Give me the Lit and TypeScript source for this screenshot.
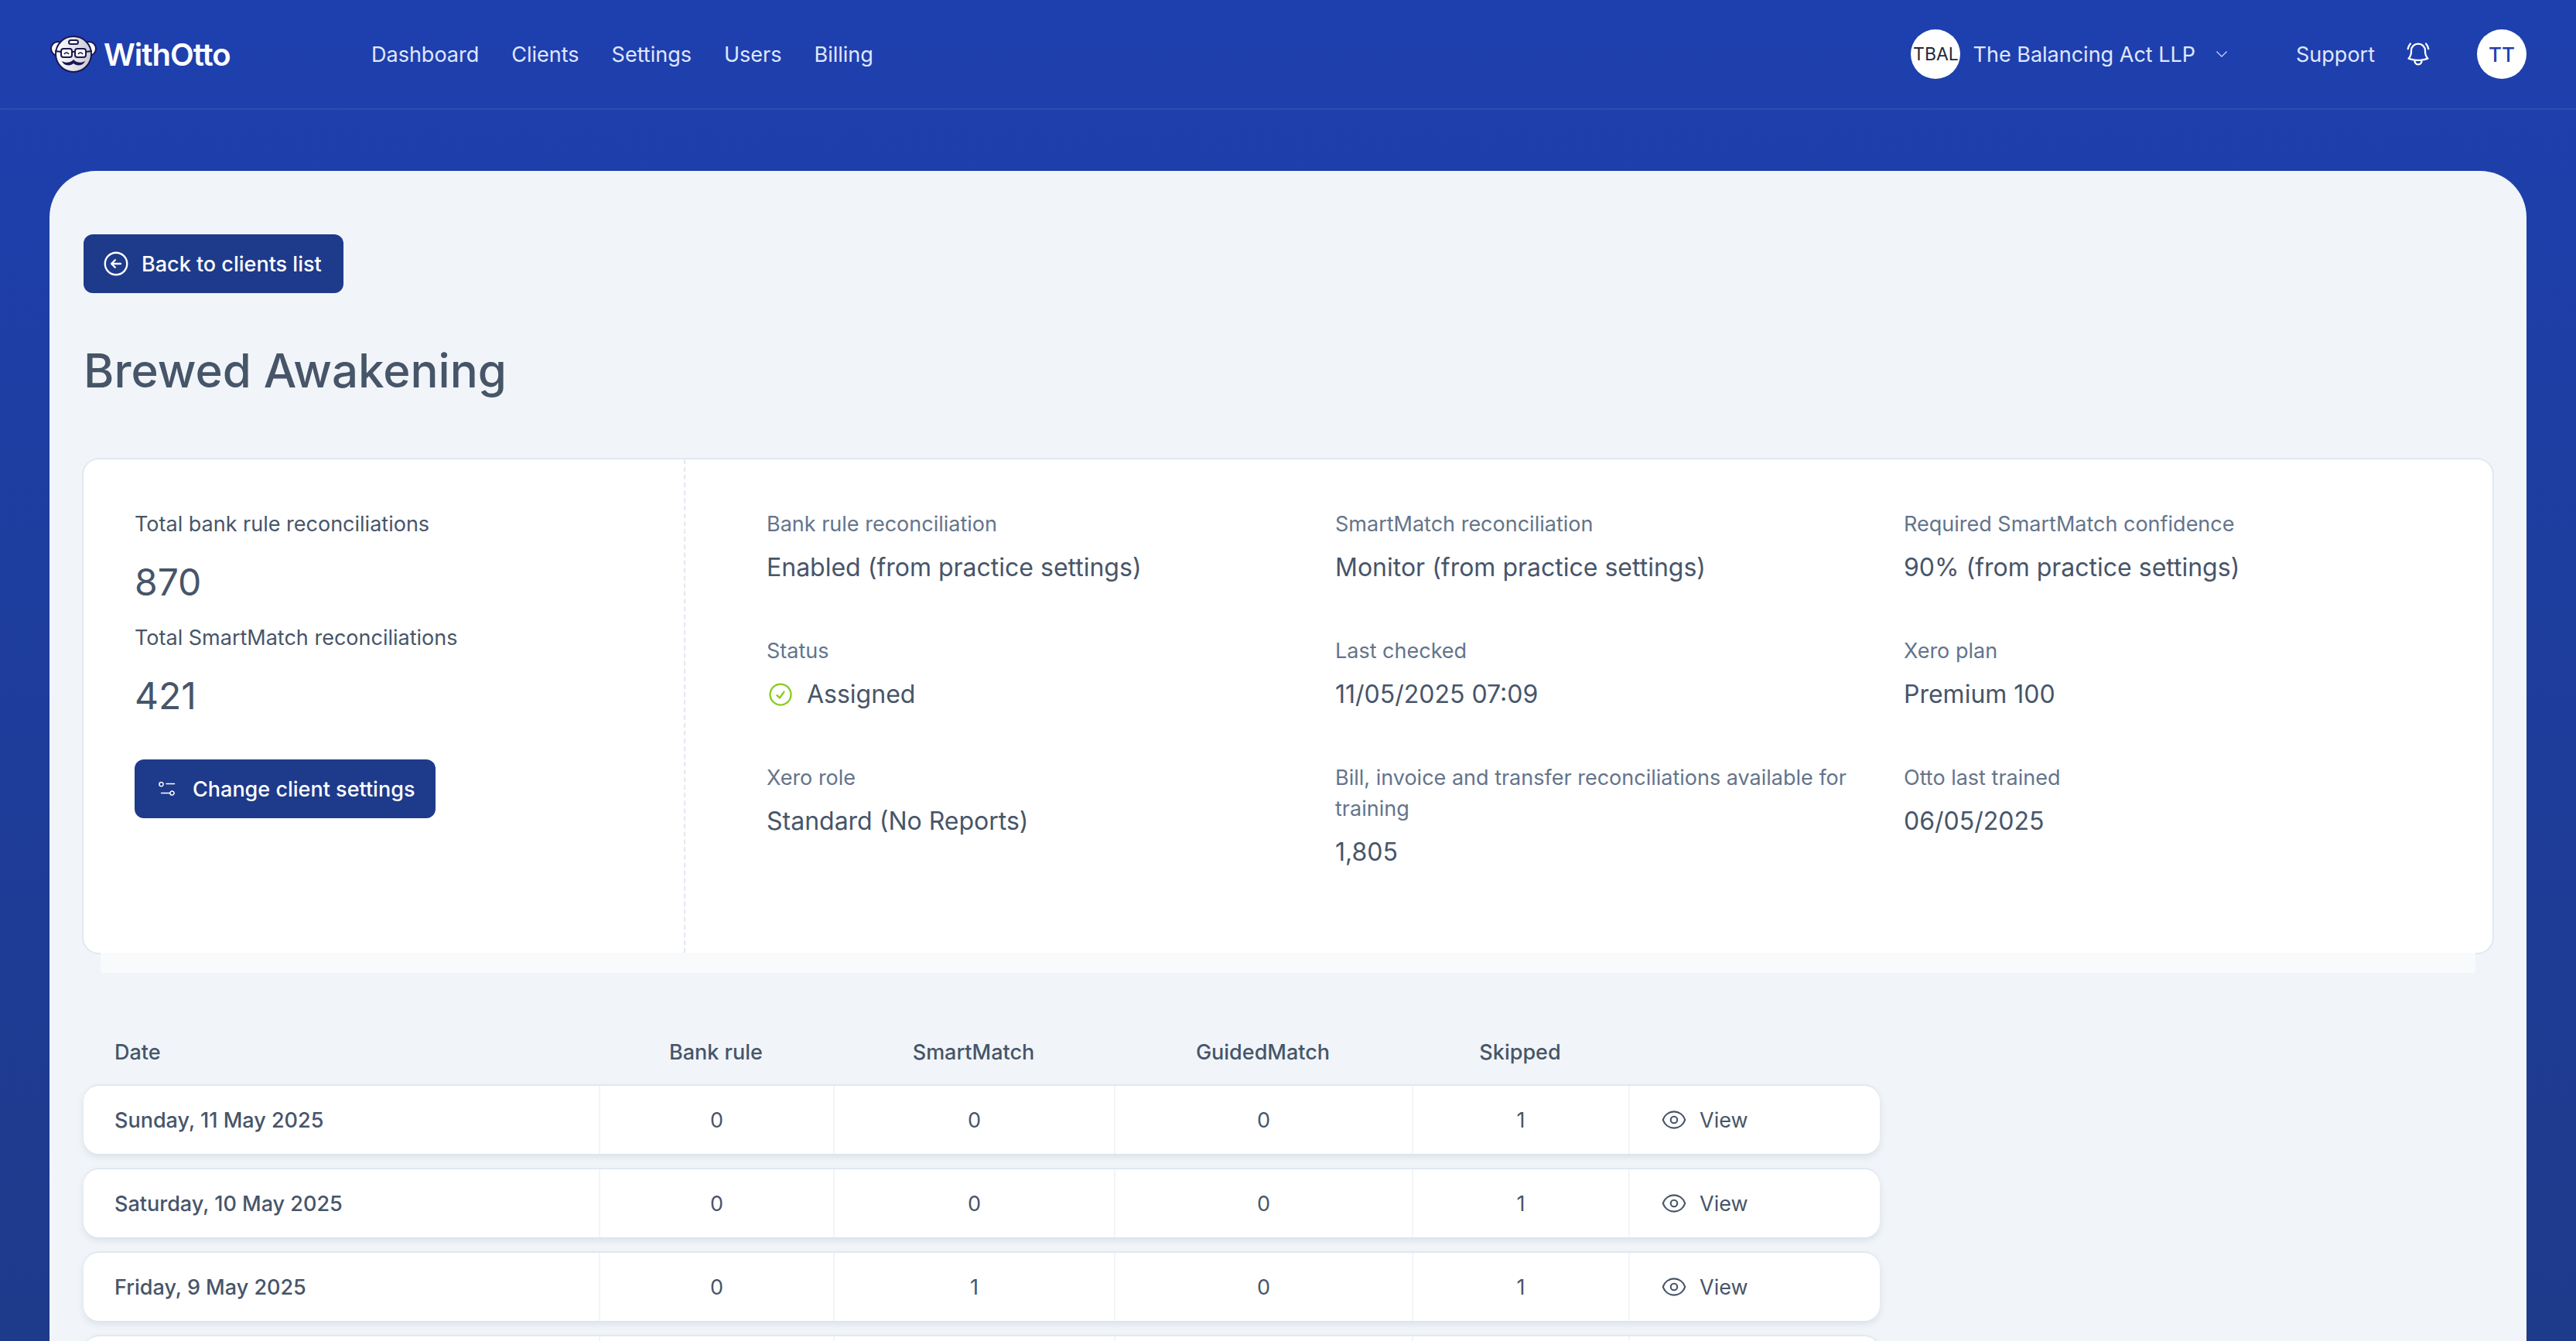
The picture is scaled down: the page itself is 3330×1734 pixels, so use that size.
import { LitElement, css, html, svg } from 'lit'
import { customElement } from 'lit/decorators.js'

const icon = (d: string, cls: string) => html`
  <svg class=${cls} viewBox="0 0 24 24" fill="none" stroke="currentColor" stroke-width="1.5"
    stroke-linecap="round" stroke-linejoin="round">${svg`<path d=${d}></path>`}</svg>
`

const EYE =
  'M2.036 12.322a1.012 1.012 0 010-.639C3.423 7.51 7.36 4.5 12 4.5c4.638 0 8.573 3.007 9.963 7.178.07.207.07.431 0 .639C20.577 16.49 16.64 19.5 12 19.5c-4.638 0-8.573-3.007-9.963-7.178zM15 12a3 3 0 11-6 0 3 3 0 016 0z'
const BELL =
  'M14.857 17.082a23.848 23.848 0 005.454-1.31A8.967 8.967 0 0118 9.75v-.7V9A6 6 0 006 9v.75a8.967 8.967 0 01-2.312 6.022c1.733.64 3.56 1.085 5.455 1.31m5.714 0a24.255 24.255 0 01-5.714 0m5.714 0a3 3 0 11-5.714 0M3.124 7.5A8.969 8.969 0 015.292 3m13.416 0a8.969 8.969 0 012.168 4.5'
const BACK = 'M11.25 9l-3 3m0 0l3 3m-3-3h7.5M21 12a9 9 0 11-18 0 9 9 0 0118 0z'
const CHECK = 'M9 12.75L11.25 15 15 9.75M21 12a9 9 0 11-18 0 9 9 0 0118 0z'
const CHEVRON = 'M19.5 8.25l-7.5 7.5-7.5-7.5'
const SLIDERS =
  'M10 5.5h10.5M3.5 3.5a2.6 2.6 0 110 5.2 2.6 2.6 0 010-5.2zM3.5 17.5h10.5M17.5 14.9a2.6 2.6 0 110 5.2 2.6 2.6 0 010-5.2z'

const details = [
  ['Bank rule reconciliation', 'Enabled (from practice settings)'],
  ['SmartMatch reconciliation', 'Monitor (from practice settings)'],
  ['Required SmartMatch confidence', '90% (from practice settings)'],
  ['Status', 'Assigned'],
  ['Last checked', '11/05/2025 07:09'],
  ['Xero plan', 'Premium 100'],
  ['Xero role', 'Standard (No Reports)'],
  ['Bill, invoice and transfer reconciliations available for training', '1,805'],
  ['Otto last trained', '06/05/2025'],
]

const rows = [
  ['Sunday, 11 May 2025', 0, 0, 0, 1],
  ['Saturday, 10 May 2025', 0, 0, 0, 1],
  ['Friday, 9 May 2025', 0, 1, 0, 1],
  ['Thursday, 8 May 2025', 0, 0, 0, 1],
]

@customElement('app-root')
export class AppRoot extends LitElement {
  static override styles = css`
    :host {
      display: block;
      height: 100vh;
      overflow: hidden;
      background: linear-gradient(#1e40af, #1e3a8a);
      font-family: 'Inter', sans-serif;
      color: #475569;
    }

    * {
      box-sizing: border-box;
    }

    .topbar {
      display: flex;
      align-items: center;
      height: 142px;
      padding: 0 64px;
      border-bottom: 2px solid rgba(255, 255, 255, 0.07);
      color: #e0e7ff;
      font-size: 27px;
    }

    .logo {
      display: flex;
      align-items: center;
      gap: 8px;
      width: 416px;
      color: #fff;
      font-size: 40px;
      font-weight: 600;
      letter-spacing: -1px;
    }

    .logo svg {
      width: 62px;
      height: 50px;
    }

    .nav {
      display: flex;
      gap: 42px;
    }

    .practice {
      display: flex;
      align-items: center;
      margin-left: auto;
    }

    .avatar {
      display: flex;
      align-items: center;
      justify-content: center;
      width: 64px;
      height: 64px;
      border-radius: 50%;
      background: #fff;
      color: #1f2937;
      font-size: 23px;
    }

    .avatar.me {
      margin-left: 58px;
      color: #1e40af;
      font-size: 26px;
      font-weight: 500;
    }

    .practice span {
      margin-left: 16px;
    }

    .chevron {
      width: 20px;
      height: 20px;
      margin-left: 24px;
    }

    .support {
      margin-left: 86px;
    }

    .bell {
      width: 36px;
      height: 36px;
      margin-left: 38px;
      color: #fff;
    }

    .panel {
      margin: 79px 64px 0;
      padding: 82px 44px 0;
      height: 2000px;
      background: #f1f5f9;
      border-radius: 60px;
    }

    .btn {
      display: inline-flex;
      align-items: center;
      height: 76px;
      background: #1e3a8a;
      border-radius: 12px;
      color: #fff;
      font-size: 27px;
      font-weight: 500;
    }

    .btn.back {
      padding: 0 28px 0 23px;
      gap: 14px;
    }

    .btn.back svg {
      width: 38px;
      height: 38px;
    }

    .btn.change {
      padding: 0 27px 0 31px;
      gap: 20px;
      margin-top: 30px;
    }

    .btn.change svg {
      width: 24px;
      height: 24px;
    }

    h1 {
      margin: 62px 0 0;
      font-size: 60px;
      line-height: 76px;
      font-weight: 500;
      color: #475569;
    }

    .summary {
      display: flex;
      height: 638px;
      margin-top: 77px;
      background: #fff;
      border-radius: 20px;
      box-shadow: 0 0 0 2px #e2e8f0;
    }

    .totals {
      width: 778px;
      padding: 64px 0 0 66px;
      border-right: 2px dashed #e2e8f0;
    }

    .totals .label {
      font-size: 27px;
      line-height: 40px;
      color: #475569;
    }

    .totals .figure {
      font-size: 48px;
      line-height: 64px;
      margin: 23px 0 20px;
    }

    .grid {
      display: grid;
      grid-template-columns: repeat(3, 735px);
      grid-auto-rows: 164px;
      padding: 64px 0 0 105px;
    }

    .label {
      font-size: 27px;
      line-height: 40px;
      color: #64748b;
    }

    .value {
      display: flex;
      align-items: center;
      gap: 16px;
      margin-top: 15px;
      font-size: 32px;
      line-height: 42px;
      color: #475569;
    }

    .value svg {
      width: 36px;
      height: 36px;
      color: #84cc16;
    }

    .strip {
      height: 26px;
      margin: 0 22px;
      background: #f8fafc;
    }

    .table {
      width: 2322px;
      margin-top: 58px;
    }

    .head,
    .row {
      display: grid;
      grid-template-columns: 666px 303px 363px 385px 280px 325px;
      align-items: center;
      font-size: 27px;
      font-weight: 500;
    }

    .head {
      height: 88px;
      margin-bottom: 0;
    }

    .row {
      height: 88px;
      margin-bottom: 20px;
      background: #fff;
      border-radius: 20px;
      box-shadow: 0 -2px 0 #e2e8f0, 0 4px 8px rgba(148, 163, 184, 0.25);
      font-weight: 400;
    }

    .cell {
      display: flex;
      align-items: center;
      justify-content: center;
      height: 100%;
      border-left: 2px solid #f1f5f9;
    }

    .cell:first-child {
      justify-content: flex-start;
      padding-left: 40px;
      border-left: none;
      font-weight: 500;
    }

    .head .cell {
      border-left: none;
    }

    .row .view {
      justify-content: flex-start;
      gap: 16px;
      padding-left: 40px;
    }

    .view svg {
      width: 34px;
      height: 34px;
    }
  `

  private renderLogo() {
    return html`
      <svg viewBox="0 0 62 50">
        <defs>
          <linearGradient id="face" x1="0" x2="1">
            <stop offset="0" stop-color="#ffffff"></stop>
            <stop offset="1" stop-color="#c9c9d6"></stop>
          </linearGradient>
        </defs>
        <g stroke="#1a1650" stroke-width="2" fill="url(#face)">
          <circle cx="11" cy="18" r="9" fill="#fff"></circle>
          <circle cx="51" cy="18" r="9" fill="#fff"></circle>
          <circle cx="31" cy="25" r="23"></circle>
          <rect x="25" y="7" width="12" height="5" rx="2.5" fill="#fff"></rect>
          <rect x="15" y="18" width="14" height="11" rx="3" fill="#fff"></rect>
          <rect x="33" y="18" width="14" height="11" rx="3" fill="#fff"></rect>
          <path d="M29 22h4M15 22l-8-1M47 22l8-1" fill="none"></path>
          <path d="M19 25q3-4 6 0M37 25q3-4 6 0" fill="none" stroke-width="1.5"></path>
        </g>
        <path d="M31 32c-3 4-10 5-15 2 2 6 11 7 15 3 4 4 13 3 15-3-5 3-12 2-15-2z" fill="#1a1650"></path>
      </svg>
      WithOtto
    `
  }

  override render() {
    return html`
      <div class="topbar">
        <div class="logo">${this.renderLogo()}</div>
        <div class="nav">
          <div>Dashboard</div>
          <div>Clients</div>
          <div>Settings</div>
          <div>Users</div>
          <div>Billing</div>
        </div>
        <div class="practice">
          <div class="avatar">TBAL</div>
          <span>The Balancing Act LLP</span>
          ${icon(CHEVRON, 'chevron')}
        </div>
        <div class="support">Support</div>
        ${icon(BELL, 'bell')}
        <div class="avatar me">TT</div>
      </div>
      <div class="panel">
        <div class="btn back">${icon(BACK, '')}Back to clients list</div>
        <h1>Brewed Awakening</h1>
        <div class="summary">
          <div class="totals">
            <div class="label">Total bank rule reconciliations</div>
            <div class="figure">870</div>
            <div class="label">Total SmartMatch reconciliations</div>
            <div class="figure">421</div>
            <div class="btn change">${icon(SLIDERS, '')}Change client settings</div>
          </div>
          <div class="grid">
            ${details.map(
              ([label, value]) => html`
                <div>
                  <div class="label">${label}</div>
                  <div class="value">
                    ${value === 'Assigned' ? icon(CHECK, '') : ''}${value}
                  </div>
                </div>
              `,
            )}
          </div>
        </div>
        <div class="strip"></div>
        <div class="table">
          <div class="head">
            <div class="cell">Date</div>
            <div class="cell">Bank rule</div>
            <div class="cell">SmartMatch</div>
            <div class="cell">GuidedMatch</div>
            <div class="cell">Skipped</div>
          </div>
          ${rows.map(
            (row) => html`
              <div class="row">
                ${row.map((c) => html`<div class="cell">${c}</div>`)}
                <div class="cell view">${icon(EYE, '')}View</div>
              </div>
            `,
          )}
        </div>
      </div>
    `
  }
}

declare global {
  interface HTMLElementTagNameMap {
    'app-root': AppRoot
  }
}
